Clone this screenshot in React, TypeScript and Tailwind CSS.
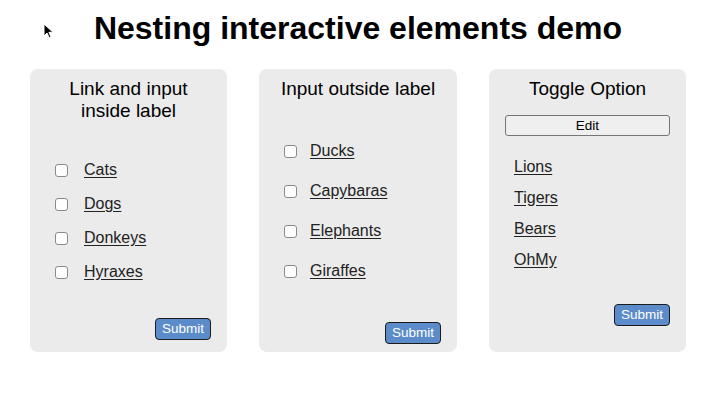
import React from "react";

const font = { fontFamily: '"Liberation Sans", Arial, Helvetica, sans-serif' };

function Checkbox() {
  return (
    <input
      type="checkbox"
      className="appearance-none m-0 w-[13px] h-[13px] shrink-0 rounded-[3px] border border-[#8a8a8a] bg-white"
    />
  );
}

function SubmitButton({ className }: { className: string }) {
  return (
    <div className={`flex justify-end ${className}`}>
      <button className="h-[22px] w-[56px] rounded-[4px] border border-[#1c1c1c] bg-[#5b8cc9] text-[13.5px] leading-none text-white">
        Submit
      </button>
    </div>
  );
}

function Card({ children, className = "w-[197px]" }: { children: React.ReactNode; className?: string }) {
  return (
    <div className={`flex h-[283px] flex-col rounded-[8px] bg-[#ebebeb] px-[16px] pt-[9px] ${className}`}>
      {children}
    </div>
  );
}

const linkCls = "text-[16px] leading-[18px] text-[#222] underline underline-offset-[2px]";

export default function App() {
  const insideLabel = ["Cats", "Dogs", "Donkeys", "Hyraxes"];
  const outsideLabel = ["Ducks", "Capybaras", "Elephants", "Giraffes"];
  const toggles = ["Lions", "Tigers", "Bears", "OhMy"];

  return (
    <div className="relative min-h-[402px] w-[716px] bg-white" style={font}>
      {/* mouse pointer */}
      <svg className="absolute left-[43px] top-[23px]" width="11" height="16" viewBox="0 0 11 16">
        <path d="M1 1 L1 13 L4 10 L6.2 14.6 L8 13.8 L5.9 9.3 L10 9.3 Z" fill="#000" stroke="#fff" strokeWidth="1" strokeLinejoin="round" />
      </svg>

      <h1 className="pt-[10px] text-center text-[32px] font-bold leading-[37px] text-black">
        Nesting interactive elements demo
      </h1>

      <div className="mt-[22px] flex justify-center gap-[32px]">
        <Card>
          <h2 className="text-center text-[19px] leading-[22px] text-black">
            Link and input inside label
          </h2>
          <div className="mt-[31px] flex flex-col">
            {insideLabel.map((name) => (
              <label key={name} className="flex h-[34px] items-center pl-[9px]">
                <Checkbox />
                <a className={`ml-[16px] ${linkCls}`}>{name}</a>
              </label>
            ))}
          </div>
          <SubmitButton className="mt-[29px]" />
        </Card>

        <Card className="w-[198px]">
          <h2 className="text-center text-[19px] leading-[22px] text-black">Input outside label</h2>
          <div className="mt-[31px] flex flex-col">
            {outsideLabel.map((name) => (
              <div key={name} className="flex h-[40px] items-center pl-[9px]">
                <Checkbox />
                <label className={`ml-[13px] ${linkCls}`}>{name}</label>
              </div>
            ))}
          </div>
          <SubmitButton className="mt-[31px]" />
        </Card>

        <Card>
          <h2 className="text-center text-[19px] leading-[22px] text-black">Toggle Option</h2>
          <button className="mt-[15px] h-[21px] w-full rounded-[3px] border border-[#767676] bg-[#efefef] text-[13.5px] leading-none text-black">
            Edit
          </button>
          <div className="mt-[15px] flex flex-col">
            {toggles.map((name) => (
              <div key={name} className="flex h-[31px] items-center pl-[9px]">
                <a className={linkCls}>{name}</a>
              </div>
            ))}
          </div>
          <SubmitButton className="mt-[29px]" />
        </Card>
      </div>
    </div>
  );
}
